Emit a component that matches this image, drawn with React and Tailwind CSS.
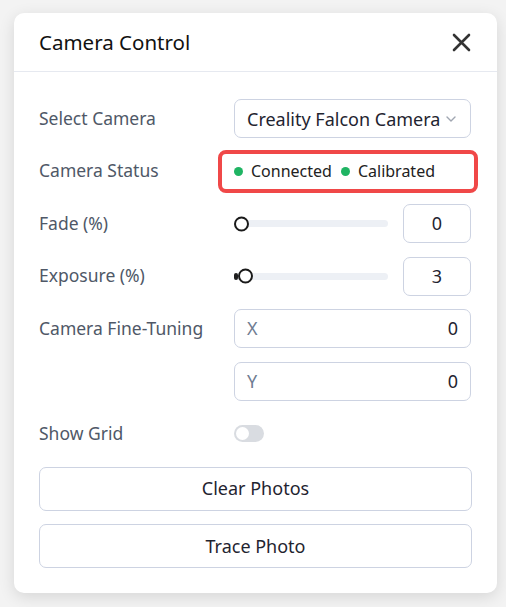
import React from "react";

const font = { fontFamily: '"Noto Sans", "Open Sans", sans-serif' };

function Label({ children }) {
  return (
    <div className="w-[195px] shrink-0 text-[17.5px] text-[#4f5867] leading-none">
      {children}
    </div>
  );
}

function Slider({ value }) {
  const pct = value;
  return (
    <div className="relative h-[7px] w-[154px] rounded-full bg-[#edf0f5]">
      <div
        className="absolute left-0 top-0 h-full rounded-full bg-[#1f1f1f]"
        style={{ width: `${Math.max(pct * 1.54, 0)}px` }}
      />
      <div
        className="absolute top-1/2 h-[15px] w-[15px] -translate-y-1/2 rounded-full border-[2.5px] border-[#1a1a1a] bg-white"
        style={{ left: `${pct * 1.54}px` }}
      />
    </div>
  );
}

export default function App() {
  return (
    <div className="min-h-[607px] w-[506px] bg-[#f3f3f3] pl-[14px] pt-[13px]" style={font}>
      <div className="w-[483px] rounded-[10px] bg-white shadow-[0_4px_16px_rgba(0,0,0,0.12)]">
        <div className="flex h-[59px] items-center justify-between border-b border-[#e6e9f0] pl-[25px] pr-[26px]">
          <div className="text-[20.5px] text-[#111111]">Camera Control</div>
          <svg width="19" height="19" viewBox="0 0 19 19" fill="none">
            <path d="M2 2L17 17M17 2L2 17" stroke="#333" strokeWidth="2.6" strokeLinecap="round" />
          </svg>
        </div>
        <div className="flex flex-col gap-[13.5px] pl-[25px] pr-[25px] pt-[27px] pb-[25px]">
          <div className="flex h-[39px] items-center">
            <Label>Select Camera</Label>
            <div className="flex h-[39px] w-[237px] items-center justify-between rounded-[7px] border border-[#cdd3e2] pl-[12px] pr-[14px]">
              <span className="text-[18px] text-[#1f2430] leading-none">Creality Falcon Camera</span>
              <svg width="10" height="6" viewBox="0 0 10 6" fill="none">
                <path d="M1 1L5 5L9 1" stroke="#a0a6b1" strokeWidth="1.4" strokeLinecap="round" strokeLinejoin="round" />
              </svg>
            </div>
          </div>
          <div className="flex h-[39px] items-center">
            <Label>Camera Status</Label>
            <div className="ml-[-16px] flex h-[43px] w-[260px] shrink-0 items-center rounded-[8px] border-4 border-[#f04848] pl-[12px]">
              <span className="h-[9px] w-[9px] rounded-full bg-[#1fb463]" />
              <span className="ml-[8px] text-[16px] text-[#222] leading-none">Connected</span>
              <span className="ml-[9px] h-[9px] w-[9px] rounded-full bg-[#1fb463]" />
              <span className="ml-[8px] text-[16px] text-[#222] leading-none">Calibrated</span>
            </div>
          </div>
          <div className="flex h-[39px] items-center">
            <Label>Fade (%)</Label>
            <Slider value={0} />
            <div className="ml-[15px] flex h-[39px] w-[68px] items-center justify-center rounded-[7px] border border-[#cdd3e2] text-[18px] text-[#1f2430]">
              0
            </div>
          </div>
          <div className="flex h-[39px] items-center">
            <Label>Exposure (%)</Label>
            <Slider value={2.5} />
            <div className="ml-[15px] flex h-[39px] w-[68px] items-center justify-center rounded-[7px] border border-[#cdd3e2] text-[18px] text-[#1f2430]">
              3
            </div>
          </div>
          <div className="flex h-[39px] items-center">
            <Label>Camera Fine-Tuning</Label>
            <div className="flex h-[39px] w-[237px] items-center justify-between rounded-[7px] border border-[#cdd3e2] pl-[12px] pr-[12px] text-[18px]">
              <span className="text-[#6f7d92]">X</span>
              <span className="text-[#1f2430]">0</span>
            </div>
          </div>
          <div className="flex h-[39px] items-center">
            <div className="w-[195px] shrink-0" />
            <div className="flex h-[39px] w-[237px] items-center justify-between rounded-[7px] border border-[#cdd3e2] pl-[12px] pr-[12px] text-[18px]">
              <span className="text-[#6f7d92]">Y</span>
              <span className="text-[#1f2430]">0</span>
            </div>
          </div>
          <div className="flex h-[39px] items-center">
            <Label>Show Grid</Label>
            <div className="flex h-[17px] w-[30px] items-center rounded-full bg-[#d9dce1] pl-[2px]">
              <div className="h-[13px] w-[13px] rounded-full bg-white" />
            </div>
          </div>
          <div className="flex h-[44px] items-center justify-center rounded-[7px] border border-[#cdd3e2] text-[18px] text-[#1f2430]">
            Clear Photos
          </div>
          <div className="flex h-[44px] items-center justify-center rounded-[7px] border border-[#cdd3e2] text-[18px] text-[#1f2430]">
            Trace Photo
          </div>
        </div>
      </div>
    </div>
  );
}
